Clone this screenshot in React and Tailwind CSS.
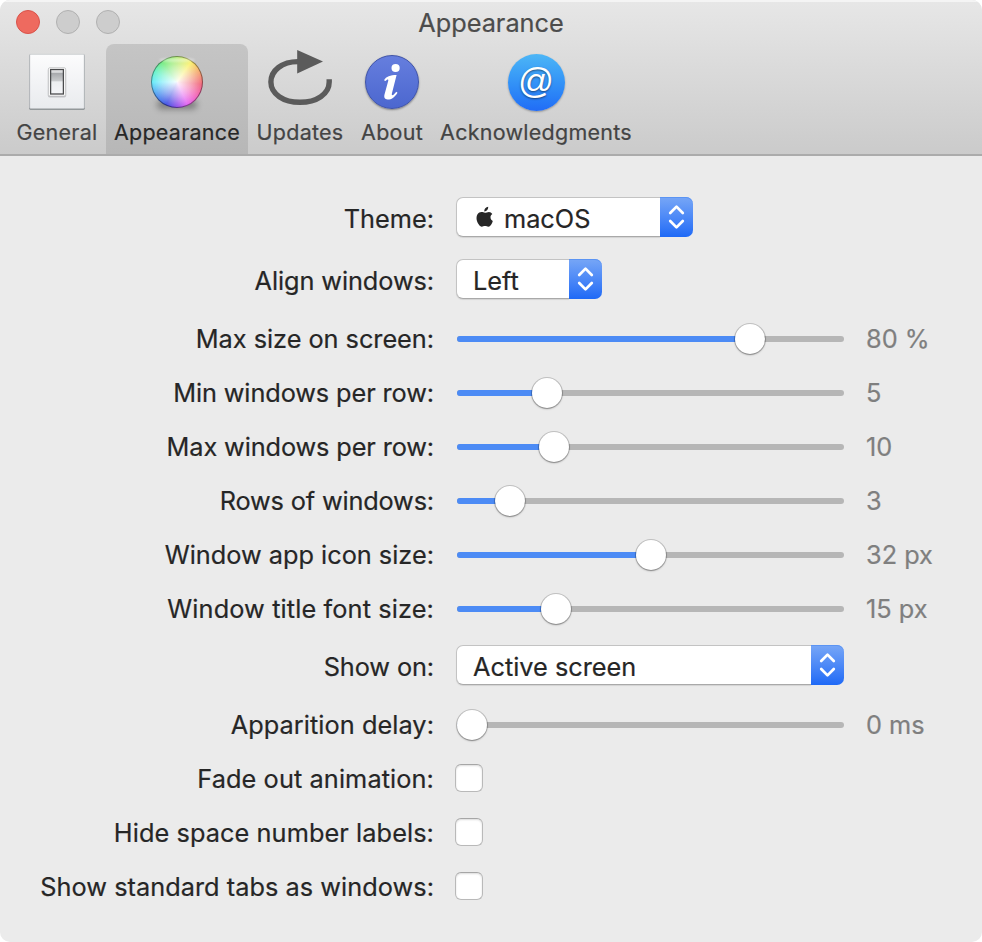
import React from "react";

function GeneralIcon() {
  return (
    <svg width="60" height="60" viewBox="0 0 60 60">
      <defs>
        <linearGradient id="plate" x1="0" y1="0" x2="0" y2="1">
          <stop offset="0" stopColor="#fcfcfd" />
          <stop offset="1" stopColor="#e9ebee" />
        </linearGradient>
        <linearGradient id="rocker" x1="0" y1="0" x2="0" y2="1">
          <stop offset="0" stopColor="#e2e3e5" />
          <stop offset="0.12" stopColor="#d6d7d9" />
          <stop offset="0.14" stopColor="#a6a8ab" />
          <stop offset="0.47" stopColor="#c9cbcd" />
          <stop offset="0.5" stopColor="#eceef0" />
          <stop offset="1" stopColor="#f4f5f8" />
        </linearGradient>
      </defs>
      <rect x="2.3" y="2.5" width="55.4" height="55.3" rx="1" fill="#7f8588" />
      <rect x="2.8" y="2.3" width="54.4" height="54.2" rx="1" fill="url(#plate)" stroke="#c5c8cb" strokeWidth="0.6" />
      <rect x="20.8" y="16" width="18.4" height="29.5" rx="2" fill="#8d9094" opacity="0.45" />
      <rect x="21.4" y="15.6" width="17.2" height="28.4" rx="1.6" fill="#fff" stroke="#b2b4b6" strokeWidth="0.6" />
      <rect x="23.6" y="17.5" width="12.8" height="24.5" fill="url(#rocker)" stroke="#4a4b4d" strokeWidth="1.3" />
    </svg>
  );
}

function ColorIcon() {
  return (
    <div className="relative h-[60px] w-[60px]">
      <div className="absolute left-[10px] top-[48px] h-[9px] w-[40px] rounded-full bg-black/35 blur-[3px]" />
      <div className="absolute left-[4px] top-[4px] h-[52px] w-[52px] rounded-full border border-black/40 bg-[radial-gradient(circle,rgba(255,255,255,0.95)_0%,rgba(255,255,255,0.5)_40%,rgba(255,255,255,0.05)_75%),conic-gradient(#a6e85c_0deg,#f8ee50_35deg,#f29a58_65deg,#ee5068_95deg,#f04cb8_130deg,#e050f0_155deg,#8038e8_180deg,#2838e0_205deg,#3890f0_240deg,#50e8f8_270deg,#50f0c0_295deg,#60e868_325deg,#a6e85c_360deg)] bg-origin-border" />
      <div className="absolute left-[12px] top-[6px] h-[4px] w-[36px] rounded-[50%] bg-white/40 blur-[1px]" />
    </div>
  );
}

function UpdatesIcon() {
  return (
    <svg width="68" height="60" viewBox="0 0 68 60" className="overflow-visible">
      <path d="M32 9.6C16 9.6 4.9 18.5 4.9 30C4.9 42 17.5 50.3 34 50.3C50.5 50.3 63.2 42 63.2 30V27.2" fill="none" stroke="#5b5b5b" strokeWidth="5.4" />
      <path d="M31.2 -2L57 9.5L31.2 21.5Z" fill="#5b5b5b" />
    </svg>
  );
}

function AboutIcon() {
  return (
    <div className="mt-[3px] flex h-[54px] w-[54px] items-center justify-center rounded-full border border-[#3f53a8] bg-linear-to-b from-[#667ede] to-[#4c67cf] shadow-[0_1px_2px_rgba(0,0,0,0.4)]">
      <svg width="20" height="38" viewBox="0 0 20 38" className="ml-px">
        <circle cx="12.6" cy="5" r="4.1" fill="#fff" />
        <path d="M1 17.2C3.2 13.4 7.2 12.2 13.6 12L8.9 30.5C8.4 32.3 9.5 32.7 10.8 31.5L13.3 28.8L14.5 29.8C11.5 34.8 8 36.8 4.6 36.6C1.6 36.4 0.8 34.2 1.5 31.6L5.2 18C5.7 16 4.4 15.8 2.4 18Z" fill="#fff" />
      </svg>
    </div>
  );
}

function AtIcon() {
  return (
    <div className="mt-[2px] flex h-[57px] w-[57px] items-center justify-center rounded-full bg-linear-to-b from-[#4db6f6] to-[#226cf6] shadow-[0_1px_2px_rgba(0,0,0,0.3)]">
      <span className="-mt-[2px] font-['Liberation_Sans',sans-serif] text-[35.5px] leading-none text-white [text-shadow:0_1px_2px_rgba(0,0,0,0.5)]">@</span>
    </div>
  );
}

const tabs = [
  { label: "General", icon: GeneralIcon, box: "w-[98px]" },
  { label: "Appearance", icon: ColorIcon, box: "w-[142px]", active: true },
  { label: "Updates", icon: UpdatesIcon, box: "w-[104px]" },
  { label: "About", icon: AboutIcon, box: "w-[80px]" },
  { label: "Acknowledgments", icon: AtIcon, box: "w-[208px]" },
];

function Toolbar() {
  return (
    <header className="flex h-[156px] flex-col border-b-2 border-[#ababab] bg-linear-to-b from-[#e7e7e7] to-[#cbcbcb] shadow-[inset_0_2px_0_#f4f4f4]">
      <div className="grid h-11 grid-cols-[1fr_auto_1fr] items-center">
        <div className="flex gap-4 pl-4">
          <span className="h-6 w-6 rounded-full border border-[#d9524a] bg-[#ee6a5f]" />
          <span className="h-6 w-6 rounded-full border border-[#b0b0b0] bg-[#cdcdcd]" />
          <span className="h-6 w-6 rounded-full border border-[#b0b0b0] bg-[#cdcdcd]" />
        </div>
        <h1 className="pt-0.5 text-[25.3px] leading-8 tracking-[0px] text-[#4c4c4c] [-webkit-text-stroke:0.2px_#4c4c4c]">Appearance</h1>
      </div>
      <nav className="flex h-[110px] pl-2">
        {tabs.map(({ label, icon: Icon, box, active }) => (
          <button
            key={label}
            className={`${box} flex flex-col items-center rounded-t-lg pt-2 ${active ? "bg-linear-to-b from-[#c5c5c5] to-[#b7b7b7] text-[#272727]" : "text-[#444444]"}`}
          >
            <span className="flex h-[60px] justify-center">
              <Icon />
            </span>
            <span className="mt-[6px] whitespace-nowrap text-[21.5px] leading-7 tracking-[0.25px] [-webkit-text-stroke:0.2px_currentColor]">{label}</span>
          </button>
        ))}
      </nav>
    </header>
  );
}

function Row({ label, height = "h-[54px]", tracking = "", labelPad = "", children }) {
  return (
    <div className={`grid grid-cols-[434px_1fr] items-center gap-x-[22px] ${height}`}>
      <span className={`whitespace-nowrap text-right ${labelPad} ${tracking}`}>{label}</span>
      {children}
    </div>
  );
}

function Select({ width, children }) {
  return (
    <div className={`flex h-10 ${width}`}>
      <div className="flex flex-1 items-center rounded-l-[7px] border border-r-0 border-[#c3c3c3] border-b-[#a9a9a9] bg-white pl-4 pt-1 shadow-[0_1px_1px_rgba(0,0,0,0.1)]">
        {children}
      </div>
      <div className="flex w-[33px] items-center justify-center rounded-r-[7px] bg-linear-to-b from-[#77a6f6] to-[#1e69f6] shadow-[inset_0_1px_0_#5b94f3]">
        <svg width="17" height="26" viewBox="0 0 17 26" fill="none" stroke="#fff" strokeWidth="2.7" strokeLinecap="round" strokeLinejoin="round">
          <path d="M2.2 9L8.5 2.6L14.8 9M2.2 17L8.5 23.4L14.8 17" />
        </svg>
      </div>
    </div>
  );
}

function Slider({ knob, value }) {
  return (
    <div className="flex items-center">
      <div className="relative ml-px flex h-8 w-[387px] items-center">
        <div className="h-1.5 w-full overflow-hidden rounded-full bg-[#b6b6b6]">
          <div className="h-full bg-[#4c8bf5]" style={{ width: knob }} />
        </div>
        <div
          className="absolute top-[1px] h-[30px] w-[30px] rounded-full bg-white shadow-[0_0_0_1px_rgba(0,0,0,0.17),0_1px_2px_rgba(0,0,0,0.35)]"
          style={{ left: knob - 15 }}
        />
      </div>
      <span className="ml-[22px] text-[#7f7f7f]">{value}</span>
    </div>
  );
}

function Checkbox() {
  return (
    <div className="-ml-px -mt-0.5 h-7 w-7 rounded-md border border-[#b9b9b9] border-t-[#a6a6a6] bg-white shadow-[inset_0_1px_2px_rgba(0,0,0,0.14)]" />
  );
}

function AppleLogo() {
  return (
    <svg width="18" height="22" viewBox="0 0 18 22" fill="#262626" className="-mt-1 ml-[3px] mr-[10px]">
      <path d="M12.2 0.8C12.4 3.2 10.6 5.5 8.3 5.4C8 3.1 10 1 12.2 0.8Z" />
      <path d="M16.3 7.9C15 8.7 14.5 9.7 14.5 11.2C14.5 13 15.4 14.2 16.8 14.9C16.4 16.2 15.9 17.5 15.1 18.7C14.2 20 13.5 20.7 12.3 20.7C11.1 20.7 10.5 20.1 9 20.1C7.5 20.1 6.9 20.7 5.8 20.7C4.6 20.7 3.7 19.8 2.8 18.5C0.3 15.1 -0.2 10.8 1.5 8.2C2.5 6.8 4 6 5.4 6C6.9 6 7.9 6.7 9 6.7C10.1 6.7 11.3 5.9 13 5.9C14.3 5.9 15.5 6.6 16.3 7.9Z" />
    </svg>
  );
}

export default function App() {
  return (
    <div className="h-[942px] w-[982px] bg-white">
      <div className="h-full overflow-hidden rounded-[10px] bg-[#ebebeb] font-[Inter,sans-serif] text-[25.3px] leading-8 text-[#262626]">
        <Toolbar />
        <main className="pt-[30px] [-webkit-text-stroke:0.2px_currentColor]">
          <Row label="Theme:" height="h-[62px]" labelPad="pt-1">
            <Select width="w-[237px]">
              <AppleLogo />
              macOS
            </Select>
          </Row>
          <Row label="Align windows:" height="h-[62px]" labelPad="pt-1" tracking="tracking-[-0.08px]">
            <Select width="w-[146px]">Left</Select>
          </Row>
          <div className="pt-0.5">
            <Row label="Max size on screen:" tracking="tracking-[-0.03px]"><Slider knob={293} value="80 %" /></Row>
            <Row label="Min windows per row:" tracking="tracking-[-0.1px]"><Slider knob={90} value="5" /></Row>
            <Row label="Max windows per row:" tracking="tracking-[-0.12px]"><Slider knob={97} value="10" /></Row>
            <Row label="Rows of windows:" tracking="tracking-[-0.15px]"><Slider knob={53} value="3" /></Row>
            <Row label="Window app icon size:"><Slider knob={194} value="32 px" /></Row>
            <Row label="Window title font size:" tracking="tracking-[0.12px]"><Slider knob={99} value="15 px" /></Row>
          </div>
          <Row label="Show on:" height="h-[58px]" labelPad="pt-1" tracking="tracking-[-0.1px]">
            <Select width="w-[388px]">Active screen</Select>
          </Row>
          <div className="pt-1">
            <Row label="Apparition delay:" tracking="tracking-[0.06px]"><Slider knob={15} value="0 ms" /></Row>
            <Row label="Fade out animation:" tracking="tracking-[0.1px]"><Checkbox /></Row>
            <Row label="Hide space number labels:" tracking="tracking-[0.08px]"><Checkbox /></Row>
            <Row label="Show standard tabs as windows:" tracking="tracking-[0.04px]"><Checkbox /></Row>
          </div>
        </main>
      </div>
    </div>
  );
}
